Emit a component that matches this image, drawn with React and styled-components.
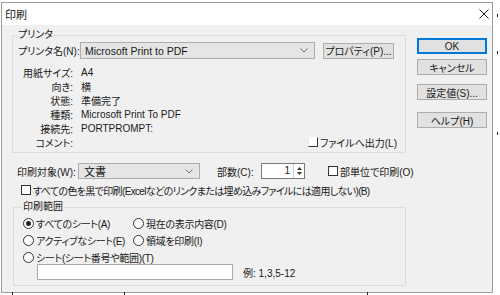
import React from "react";
import styled, { createGlobalStyle, css } from "styled-components";

const Global = createGlobalStyle`
  html, body { margin: 0; padding: 0; background: #ffffff; }
  body {
    font-family: "Liberation Sans", "Noto Sans CJK JP", sans-serif;
    font-size: 10px;
    color: #1a1a1a;
    font-feature-settings: "palt";
  }
  #root { width: 500px; height: 295px; overflow: hidden; }
`;

const Page = styled.div`
  position: relative;
  width: 500px;
  height: 295px;
  box-sizing: border-box;
  padding: 2px 0 0 1px;
`;

const Tick = styled.span`
  position: absolute;
  background: #222;
  width: 1px;
  height: 3px;
`;

const Window = styled.div`
  width: 492px;
  height: 291px;
  box-sizing: border-box;
  border: 1px solid #9c9c9c;
  background: #f0f0f0;
  display: flex;
  flex-direction: column;
`;

const TitleBar = styled.div`
  height: 22px;
  flex: none;
  background: #ffffff;
  display: flex;
  align-items: center;
  justify-content: space-between;
  padding: 0 3px 0 3px;
  font-size: 11px;
`;

const Client = styled.div`
  flex: 1;
  display: flex;
  padding: 0 4px 0 10px;
`;

const LeftCol = styled.div`
  width: 394px;
  display: flex;
  flex-direction: column;
`;

const RightCol = styled.div`
  width: 70px;
  margin-left: 11px;
  padding-top: 13px;
  display: flex;
  flex-direction: column;
`;

const Group = styled.fieldset`
  margin: ${(p) => p.$mt}px 0 0 ${(p) => p.$ml || 0}px;
  padding: 0 ${(p) => p.$pr}px ${(p) => p.$pb}px ${(p) => p.$pl}px;
  border: 1px solid #dcdcdc;
  min-width: 0;
`;

const Legend = styled.legend`
  padding: 0 1px;
  margin-left: -1px;
  line-height: 14px;
`;

const Row = styled.div`
  display: flex;
  align-items: center;
  height: ${(p) => p.$h}px;
  margin-top: ${(p) => p.$mt || 0}px;
  margin-left: ${(p) => p.$ml || 0}px;
  white-space: nowrap;
`;

const Label = styled.span`
  width: ${(p) => p.$w}px;
  margin-left: ${(p) => p.$ml || 0}px;
  flex: none;
  white-space: nowrap;
`;

const Combo = styled.div`
  width: ${(p) => p.$w}px;
  height: ${(p) => p.$h}px;
  box-sizing: border-box;
  border: 1px solid #adadad;
  background: #e5e5e5;
  display: flex;
  align-items: center;
  justify-content: space-between;
  padding: 0 6px 0 ${(p) => p.$pl}px;
  font-size: ${(p) => p.$fs || 10}px;
  flex: none;
`;

const Button = styled.div`
  width: ${(p) => p.$w || 70}px;
  height: 16px;
  box-sizing: border-box;
  border: 1px solid ${(p) => (p.$default ? "#0078d7" : "#adadad")};
  ${(p) =>
    p.$default &&
    css`
      box-shadow: inset 0 0 0 1px #0078d7;
    `}
  background: #e1e1e1;
  display: flex;
  align-items: center;
  justify-content: center;
  margin-top: ${(p) => p.$mt || 0}px;
  margin-left: ${(p) => p.$ml || 0}px;
  flex: none;
  white-space: nowrap;
`;

const InfoGrid = styled.div`
  display: grid;
  grid-template-columns: 55px 1fr;
  grid-auto-rows: 14px;
  column-gap: 8px;
  margin-top: 6px;
  align-items: center;
`;

const InfoLabel = styled.span`
  text-align: right;
  white-space: nowrap;
`;

const InfoValue = styled.span`
  display: flex;
  justify-content: ${(p) => (p.$end ? "flex-end" : "flex-start")};
  white-space: nowrap;
`;

const Check = styled.label`
  display: inline-flex;
  align-items: center;
  gap: 2px;
  white-space: nowrap;
  margin-left: ${(p) => p.$ml || 0}px;
  letter-spacing: ${(p) => p.$ls || 0}px;
`;

const Box = styled.span`
  width: 10px;
  height: 10px;
  box-sizing: border-box;
  background: #fff;
  flex: none;
  ${(p) =>
    p.$flat
      ? css`
          border-right: 1px solid #333;
          border-bottom: 1px solid #333;
          border-left: 1px solid #e8e8e8;
          border-top: 1px solid #ffffff;
        `
      : css`
          border: 1px solid #333;
        `}
`;

const RadioGrid = styled.div`
  display: grid;
  grid-template-columns: 110px 160px;
  grid-auto-rows: 13px;
  row-gap: 4px;
  margin-top: 3px;
  align-items: center;
`;

const Radio = styled.label`
  display: flex;
  align-items: center;
  gap: 2px;
  white-space: nowrap;
  letter-spacing: -0.3px;
  grid-column: ${(p) => (p.$span ? "1 / span 2" : "auto")};
`;

const Circle = styled.span`
  width: 11px;
  height: 11px;
  box-sizing: border-box;
  border: 1px solid #333;
  border-radius: 50%;
  background: #fff;
  display: flex;
  align-items: center;
  justify-content: center;
  flex: none;
  &::after {
    content: "";
    width: 5px;
    height: 5px;
    border-radius: 50%;
    background: ${(p) => (p.$on ? "#222" : "transparent")};
  }
`;

const TextInput = styled.div`
  width: 196px;
  height: 16px;
  box-sizing: border-box;
  border: 1px solid #acacac;
  background: #fff;
  flex: none;
`;

const Example = styled.span`
  margin-left: 10px;
`;

const Spin = styled.div`
  width: 44px;
  height: 16px;
  box-sizing: border-box;
  border: 1px solid #7a7a7a;
  background: #fff;
  display: flex;
  flex: none;
`;

const SpinValue = styled.span`
  flex: 1;
  text-align: right;
  padding-right: 3px;
  line-height: 14px;
`;

const SpinArrows = styled.span`
  width: 10px;
  border-left: 1px solid #d0d0d0;
  display: flex;
  flex-direction: column;
  align-items: center;
  justify-content: center;
  gap: 2px;
`;

const Chevron = () => (
  <svg width="8" height="5" viewBox="0 0 8 5">
    <path d="M0.5 0.5 L4 4 L7.5 0.5" fill="none" stroke="#707070" strokeWidth="1" />
  </svg>
);

const Tri = ({ up }) => (
  <svg width="5" height="3" viewBox="0 0 5 3">
    <path d={up ? "M0 3 L2.5 0 L5 3 Z" : "M0 0 L5 0 L2.5 3 Z"} fill="#333" />
  </svg>
);

const CloseX = () => (
  <svg width="10" height="10" viewBox="0 0 10 10">
    <path d="M0.5 0.5 L9.5 9.5 M9.5 0.5 L0.5 9.5" stroke="#222" strokeWidth="1" fill="none" />
  </svg>
);

const info = [
  ["用紙サイズ:", "A4"],
  ["向き:", "横"],
  ["状態:", "準備完了"],
  ["種類:", "Microsoft Print To PDF"],
  ["接続先:", "PORTPROMPT:"],
];

export default function App() {
  return (
    <Page>
      <Global />
      <Tick style={{ left: 497, top: 14 }} />
      <Tick style={{ left: 497, top: 51 }} />
      <Tick style={{ left: 497, top: 132 }} />
      <Tick style={{ left: 12, top: 292 }} />
      <Tick style={{ left: 124, top: 292 }} />
      <Tick style={{ left: 367, top: 292 }} />
      <Window>
        <TitleBar>
          <span>印刷</span>
          <CloseX />
        </TitleBar>
        <Client>
          <LeftCol>
            <Group $mt={3} $pl={5} $pr={8} $pb={3}>
              <Legend>プリンタ</Legend>
              <Row $h={17}>
                <Label $w={62}>プリンタ名(N):</Label>
                <Combo $w={235} $h={17} $pl={4} $fs={10.5}>
                  <span>Microsoft Print to PDF</span>
                  <Chevron />
                </Combo>
                <Button $w={71} $ml={8}>プロパティ(P)...</Button>
              </Row>
              <InfoGrid>
                {info.map(([k, v]) => (
                  <React.Fragment key={k}>
                    <InfoLabel>{k}</InfoLabel>
                    <InfoValue>{v}</InfoValue>
                  </React.Fragment>
                ))}
                <InfoLabel>コメント:</InfoLabel>
                <InfoValue $end>
                  <Check>
                    <Box $flat />
                    ファイルへ出力(L)
                  </Check>
                </InfoValue>
              </InfoGrid>
            </Group>
            <Row $h={16} $mt={10} $ml={5}>
              <Label $w={61}>印刷対象(W):</Label>
              <Combo $w={122} $h={16} $pl={5} $fs={11}>
                <span>文書</span>
                <Chevron />
              </Combo>
              <Label $w={44} $ml={17}>部数(C):</Label>
              <Spin>
                <SpinValue>1</SpinValue>
                <SpinArrows>
                  <Tri up />
                  <Tri />
                </SpinArrows>
              </Spin>
              <Check $ml={23}>
                <Box />
                部単位で印刷(O)
              </Check>
            </Row>
            <Row $h={14} $mt={4} $ml={9}>
              <Check $ls={-0.65}>
                <Box />
                すべての色を黒で印刷(Excelなどのリンクまたは埋め込みファイルには適用しない)(B)
              </Check>
            </Row>
            <Group $mt={3} $ml={1} $pl={9} $pr={8} $pb={5}>
              <Legend>印刷範囲</Legend>
              <RadioGrid>
                <Radio>
                  <Circle $on />
                  すべてのシート(A)
                </Radio>
                <Radio>
                  <Circle />
                  現在の表示内容(D)
                </Radio>
                <Radio>
                  <Circle />
                  アクティブなシート(E)
                </Radio>
                <Radio>
                  <Circle />
                  領域を印刷(I)
                </Radio>
                <Radio $span>
                  <Circle />
                  シート(シート番号や範囲)(T)
                </Radio>
              </RadioGrid>
              <Row $h={16} $ml={14}>
                <TextInput />
                <Example>例: 1,3,5-12</Example>
              </Row>
            </Group>
          </LeftCol>
          <RightCol>
            <Button $default>OK</Button>
            <Button $mt={5}>キャンセル</Button>
            <Button $mt={9}>設定値(S)...</Button>
            <Button $mt={12}>ヘルプ(H)</Button>
          </RightCol>
        </Client>
      </Window>
    </Page>
  );
}
